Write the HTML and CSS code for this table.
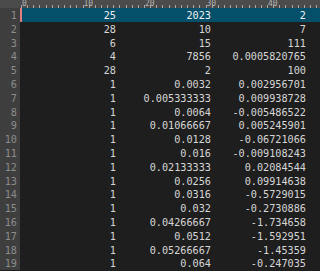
FILE: index.html
```html
<!DOCTYPE html>
<html lang="en">

<head>
    <meta charset="UTF-8">
    <title>data.csv</title>
    <link rel="stylesheet" href="styles.css">
</head>

<body>
    <div class="editor">
        <!-- column ruler -->
        <div class="ruler">
            <div class="ruler-gap"></div>
            <div class="ruler-scale">
                <span>0</span><span>10</span><span>20</span><span>30</span><span>40</span>
            </div>
        </div>

        <!-- table rows -->
        <div class="sheet" id="sheet"></div>
    </div>

    <script>
        const rows = [
            ["25", "2023", "2"],
            ["28", "10", "7"],
            ["6", "15", "111"],
            ["4", "7856", "0.0005820765"],
            ["28", "2", "100"],
            ["1", "0.0032", "0.002956701"],
            ["1", "0.005333333", "0.009938728"],
            ["1", "0.0064", "-0.005486522"],
            ["1", "0.01066667", "0.005245901"],
            ["1", "0.0128", "-0.06721066"],
            ["1", "0.016", "-0.009108243"],
            ["1", "0.02133333", "0.02084544"],
            ["1", "0.0256", "0.09914638"],
            ["1", "0.0316", "-0.5729015"],
            ["1", "0.032", "-0.2730886"],
            ["1", "0.04266667", "-1.734658"],
            ["1", "0.0512", "-1.592951"],
            ["1", "0.05266667", "-1.45359"],
            ["1", "0.064", "-0.247035"]
        ];
        const sheet = document.getElementById("sheet");

        rows.forEach((cells, i) => {
            const row = document.createElement("div");
            row.className = i === 0 ? "row current" : "row";

            const num = document.createElement("div");
            num.className = "line-no";
            num.textContent = i + 1;
            row.appendChild(num);

            const body = document.createElement("div");
            body.className = "cells";
            if (i === 0) {
                const caret = document.createElement("span");
                caret.className = "caret";
                body.appendChild(caret);
            }
            cells.forEach(value => {
                const cell = document.createElement("span");
                cell.className = "cell";
                cell.textContent = value;
                body.appendChild(cell);
            });
            row.appendChild(body);
            sheet.appendChild(row);
        });
    </script>
</body>

</html>
```

FILE: styles.css
```css
body {
    margin: 0;
    padding: 0;
    background-color: #1e1e1e;
    overflow: hidden;
}

.editor {
    width: 320px;
    height: 271px;
    background-color: #1e1e1e;
    font-family: 'DejaVu Sans Mono', monospace;
}

/* Ruler */
.ruler {
    display: flex;
    height: 8px;
    background-color: #4b4b4b;
    overflow: hidden;
}

.ruler-gap {
    width: 21px;
    flex-shrink: 0;
}

.ruler-scale {
    flex: 1;
    display: flex;
    background-image: repeating-linear-gradient(to right, #a8a8a8 0, #a8a8a8 1px, transparent 1px, transparent 6.15px);
    background-size: 100% 3px;
    background-position: 0 bottom;
    background-repeat: no-repeat;
}

.ruler-scale span {
    width: 61.5px;
    flex-shrink: 0;
    font-family: 'DejaVu Sans Mono', monospace;
    font-size: 8px;
    line-height: 7px;
    color: #b4b4b4;
    padding-left: 1px;
    box-sizing: border-box;
}

/* Rows */
.row {
    display: flex;
    height: 13.8px;
}

.line-no {
    width: 20px;
    flex-shrink: 0;
    box-sizing: border-box;
    padding-right: 3px;
    text-align: right;
    background-color: #3e3e3e;
    color: #8c8c8c;
    font-size: 10.2px;
    line-height: 13.8px;
    padding-top: 1px;
}

.cells {
    flex: 1;
    display: flex;
    padding-left: 1px;
    color: #d6d6d6;
    font-size: 10.2px;
    line-height: 13.8px;
    padding-top: 1px;
}

.row.current .cells {
    background-color: #04506b;
    color: #f0f0f0;
}

.caret {
    width: 2px;
    height: 14px;
    margin-top: -1px;
    margin-left: -1px;
    background-color: #e07f7f;
    flex-shrink: 0;
}

.cell {
    width: 95px;
    flex-shrink: 0;
    text-align: right;
    white-space: nowrap;
}

.row.current .cell:nth-child(2) {
    width: 94px;
}
```
